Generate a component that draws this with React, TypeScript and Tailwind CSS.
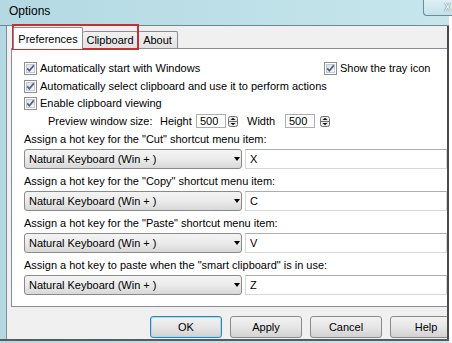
import type { ReactNode } from 'react';

const ui = "font-['Liberation_Sans',Arial,sans-serif] text-[11px] text-black whitespace-nowrap";

function Check() {
  return (
    <svg width="13" height="13" viewBox="0 0 13 13" className="shrink-0">
      <defs>
        <linearGradient id="cbg" x1="0" y1="0" x2="1" y2="1">
          <stop offset="0" stopColor="#dcdcdc" />
          <stop offset="1" stopColor="#fbfbfb" />
        </linearGradient>
      </defs>
      <rect x="0.5" y="0.5" width="12" height="12" fill="#fff" stroke="#8e8f8f" />
      <rect x="2.5" y="2.5" width="8" height="8" fill="url(#cbg)" stroke="#c9c9c9" />
      <path d="M3.2 6.4 L5.4 8.8 L9.8 3.4" stroke="#4a5f97" strokeWidth="1.7" fill="none" />
    </svg>
  );
}

function Spin() {
  return (
    <svg width="10" height="11" viewBox="0 0 10 11" className="shrink-0">
      <rect x="0.5" y="0.5" width="9" height="10" rx="2" fill="#ececec" stroke="#6f6f6f" />
      <line x1="1" y1="5.5" x2="9" y2="5.5" stroke="#6f6f6f" />
      <path d="M2.5 4 L5 1.8 L7.5 4 Z" fill="#111" />
      <path d="M2.5 7 L5 9.2 L7.5 7 Z" fill="#111" />
    </svg>
  );
}

function CheckRow({ children }: { children: ReactNode }) {
  return (
    <div className="flex items-center gap-[3px]">
      <Check />
      <span>{children}</span>
    </div>
  );
}

function HotKey({ label, value }: { label: string; value: string }) {
  return (
    <div className="flex flex-col">
      <div className="flex h-[18px] items-center">{label}</div>
      <div className="mt-[1px] flex h-[20px] gap-[3px]">
        <div className="relative flex w-[218px] items-center rounded-[3px] border border-[#8a8a8a] bg-gradient-to-b from-[#f4f4f4] via-[#ebebeb] to-[#d8d8d8] pl-[4px]">
          Natural Keyboard (Win + )
          <span className="absolute right-[1px] top-[7px] h-0 w-0 border-x-[3px] border-t-[4px] border-x-transparent border-t-black" />
        </div>
        <div className="flex flex-1 items-center border border-[#d5d7db] border-t-[#abadb3] bg-white pl-[4px]">{value}</div>
      </div>
    </div>
  );
}

function Btn({ children, main }: { children: ReactNode; main?: boolean }) {
  return (
    <div
      className={
        'flex h-[22px] w-[72px] shrink-0 items-center justify-center rounded-[3px] border bg-gradient-to-b from-[#f2f2f2] via-[#e6e6e6] to-[#d2d2d2] ' +
        (main ? 'border-[#3c7fb1] shadow-[inset_0_0_0_1px_#9fdcf5]' : 'border-[#8a8a8a]')
      }
    >
      {children}
    </div>
  );
}

export default function App() {
  return (
    <div className={'relative h-[343px] w-[452px] overflow-hidden bg-white ' + ui}>
      <div className="flex h-[343px] w-[449px] flex-col bg-gradient-to-r from-[#b4d9e3] to-[#c6e6ec]">
        <div className="flex h-[26px] items-center border-b border-[#6f8791] pb-[4px] pl-[9px] text-[12px]">Options</div>
        <div className="flex h-[313px]">
          <div className="w-[7px] border-r border-[#7b9098]" />
          <div className="flex flex-1 flex-col overflow-hidden border-r-2 border-[#4a4a4a] bg-[#f0f0f0]">
            <div className="flex h-[22px] items-end pl-[6px]">
              <div className="relative z-10 -mb-px flex h-[22px] w-[70px] items-start justify-center rounded-t-[2px] border border-b-0 border-[#898c95] bg-white pt-[3px]">
                Preferences
              </div>
              <div className="flex h-[17px] w-[55px] items-center justify-center rounded-t-[2px] border border-b-0 border-l-0 border-[#898c95] bg-gradient-to-b from-[#f2f2f2] to-[#e1e1e1]">
                Clipboard
              </div>
              <div className="flex h-[17px] w-[40px] items-center justify-center rounded-t-[2px] border border-b-0 border-l-0 border-[#898c95] bg-gradient-to-b from-[#f2f2f2] to-[#e1e1e1]">
                About
              </div>
            </div>
            <div className="ml-[4px] flex h-[259px] flex-col border border-r-0 border-[#898c95] bg-white pl-[12px] pt-[10px]">
              <div className="flex h-[18px] items-center">
                <div className="w-[300px]">
                  <CheckRow>Automatically start with Windows</CheckRow>
                </div>
                <CheckRow>Show the tray icon</CheckRow>
              </div>
              <div className="flex h-[18px] items-center">
                <CheckRow>Automatically select clipboard and use it to perform actions</CheckRow>
              </div>
              <div className="flex h-[17px] items-center">
                <CheckRow>Enable clipboard viewing</CheckRow>
              </div>
              <div className="flex h-[18px] items-center pl-[24px]">
                <span className="w-[112px]">Preview window size:</span>
                <span className="w-[36px]">Height</span>
                <span className="flex h-[14px] w-[30px] items-center border border-[#abadb3] bg-white pl-[3px]">500</span>
                <span className="ml-[2px] flex"><Spin /></span>
                <span className="ml-[9px] w-[38px]">Width</span>
                <span className="flex h-[14px] w-[30px] items-center border border-[#abadb3] bg-white pl-[3px]">500</span>
                <span className="ml-[5px] flex"><Spin /></span>
              </div>
              <div className="flex flex-col gap-[3px]">
                <HotKey label={'Assign a hot key for the "Cut" shortcut menu item:'} value="X" />
                <HotKey label={'Assign a hot key for the "Copy" shortcut menu item:'} value="C" />
                <HotKey label={'Assign a hot key for the "Paste" shortcut menu item:'} value="V" />
                <HotKey label={'Assign a hot key to paste when the "smart clipboard" is in use:'} value="Z" />
              </div>
            </div>
            <div className="flex gap-[8px] pl-[143px] pt-[9px]">
              <Btn main>OK</Btn>
              <Btn>Apply</Btn>
              <Btn>Cancel</Btn>
              <Btn>Help</Btn>
            </div>
          </div>
        </div>
        <div className="h-[2px] bg-[#5a5a5a]" />
      </div>
      <div className="absolute right-0 top-[-2px] flex h-[18px] w-[29px] items-center justify-end rounded-bl-[4px] border border-r-0 border-[#6d8a96] bg-gradient-to-b from-[#dff0f4] to-[#c2e2ea] pr-[1px] text-[10px] font-bold text-[#e8f2f5] [text-shadow:0_0_1px_#333]">
        X
      </div>
      <div className="pointer-events-none absolute left-[12px] top-[24px] h-[26px] w-[127px] border-2 border-[#c62f37]" />
    </div>
  );
}
